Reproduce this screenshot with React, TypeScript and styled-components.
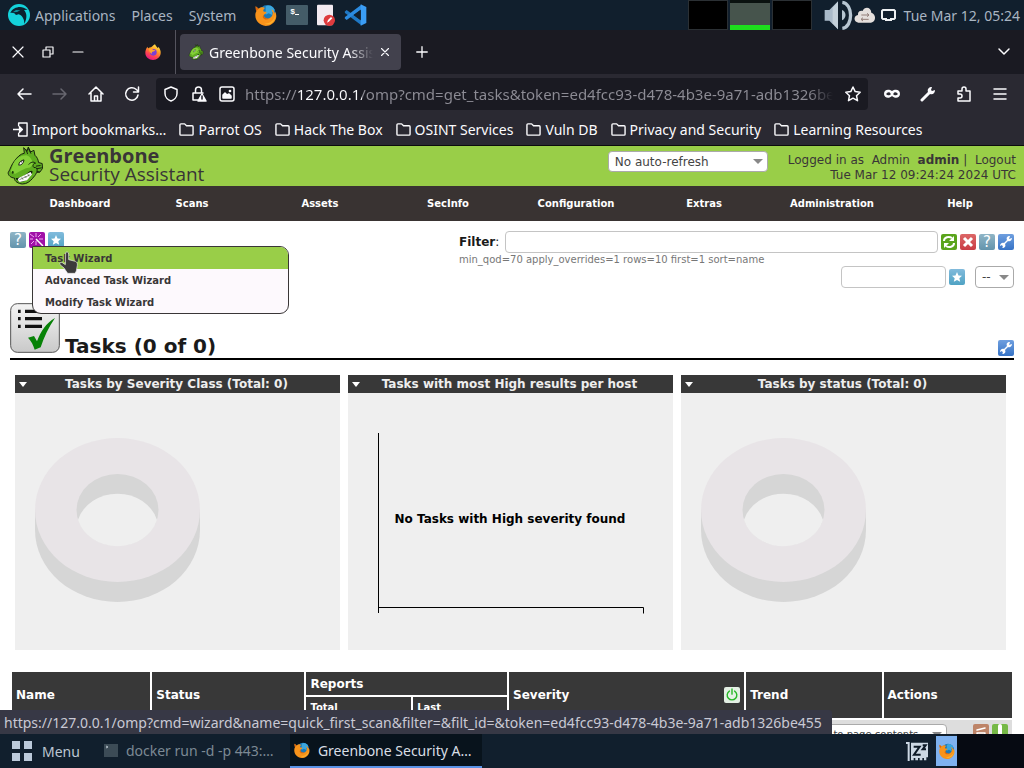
import React, { useState } from "react";
import styled, { createGlobalStyle, css } from "styled-components";

const URL_TEXT =
  "https://127.0.0.1/omp?cmd=get_tasks&token=ed4fcc93-d478-4b3e-9a71-adb1326be455";
const STATUS_TEXT =
  "https://127.0.0.1/omp?cmd=wizard&name=quick_first_scan&filter=&filt_id=&token=ed4fcc93-d478-4b3e-9a71-adb1326be455";

const bookmarks = [
  "Parrot OS",
  "Hack The Box",
  "OSINT Services",
  "Vuln DB",
  "Privacy and Security",
  "Learning Resources",
];

const menuItems = [
  "Dashboard",
  "Scans",
  "Assets",
  "SecInfo",
  "Configuration",
  "Extras",
  "Administration",
  "Help",
];

const wizards = ["Task Wizard", "Advanced Task Wizard", "Modify Task Wizard"];

// --- Icons ---
type LineProps = { size?: number; children: React.ReactNode; width?: number };

const Line: React.FC<LineProps> = ({ size = 16, width = 1.5, children }) => (
  <svg
    width={size}
    height={size}
    viewBox="0 0 16 16"
    fill="none"
    stroke="currentColor"
    strokeWidth={width}
    strokeLinecap="round"
    strokeLinejoin="round"
    aria-hidden="true"
  >
    {children}
  </svg>
);

const ParrotLogo = () => (
  <svg width="22" height="22" viewBox="0 0 66 66" aria-hidden="true">
    <circle cx="33" cy="33" r="33" fill="#14d3dc" />
    <path
      d="M7 27C14 12 32 6 47 11l12 6-11 1c9 9 10 25 1 41 0-14-6-24-17-28l-8 2-5-5c-4-2-8-2-12-1z"
      fill="#0b2230"
    />
    <path d="M14 25l10-7 13 1-10 5z" fill="#0e8f9b" />
  </svg>
);

const OldFirefox: React.FC<{ size: number }> = ({ size }) => (
  <svg width={size} height={size} viewBox="0 0 66 66" aria-hidden="true">
    <circle cx="37" cy="28" r="25" fill="#1b79b8" />
    <path d="M32 7c10-6 24 0 27 11l-8 8 2 8-12-6-9 4z" fill="#3aa7df" />
    <path
      d="M2 7l9 7c4-4 9-5 14-4l5 2c-4 3-6 7-5 10 2 2 6 1 10 2-1 6-8 6-9 10 1 8 9 12 17 9 7-3 11-10 10-18l-4-9c7 2 9 7 10 13l1-6c4 6 5 13 3 20-4 14-16 23-31 23C14 64 1 52 1 34 1 29 2 26 4 22z"
      fill="#f7931b"
    />
    <path d="M2 7l9 7-7 8c-2-5-3-10-2-15zM26 32c1 9 8 13 17 11-8 7-18 3-20-5z" fill="#d9660f" />
    <path d="M60 24c4 22-14 36-32 34 18 12 38-8 32-34z" fill="#fdb12c" />
  </svg>
);

const NewFirefox = () => (
  <svg width="16" height="16" viewBox="0 0 48 48" aria-hidden="true">
    <defs>
      <linearGradient id="fx" x1="0.8" y1="0" x2="0.3" y2="1">
        <stop offset="0" stopColor="#fff04f" />
        <stop offset="0.4" stopColor="#ff9a23" />
        <stop offset="0.7" stopColor="#ff4550" />
        <stop offset="1" stopColor="#e31587" />
      </linearGradient>
    </defs>
    <path
      d="M30 1c2 5 5 7 8 11 2-1 2-3 2-4 5 6 8 13 7 20-1 12-11 20-23 20S1 39 1 27C1 20 3 13 8 8c0 3 1 4 2 5 2-2 5-3 8-3 3-1 6-6 12-9z"
      fill="url(#fx)"
    />
    <circle cx="25" cy="25" r="10" fill="#7a3fd6" />
    <path d="M12 15c5-2 10 0 13 3l6 1c-2 3-5 4-8 4-3 1-3 4-1 6-6 0-10-7-10-14z" fill="#ffa62b" />
  </svg>
);

const TerminalIcon = () => (
  <svg width="22" height="20" viewBox="0 0 22 20" aria-hidden="true">
    <rect width="22" height="20" rx="1" fill="#445c68" />
    <path d="M9 9.500h4" stroke="#fff" />
  </svg>
);

const NoteIcon = () => (
  <svg width="18" height="22" viewBox="0 0 54 66" aria-hidden="true">
    <rect x="0" y="2" width="48" height="62" rx="3" fill="#f3ebf1" />
    <circle cx="37" cy="49" r="17" fill="#dd3b3e" />
    <path d="M30 56l3-8 9-9 4 4-9 9z" fill="#fff" />
  </svg>
);

const CodeIcon = () => (
  <svg width="23" height="22" viewBox="0 0 69 66" aria-hidden="true">
    <path d="M2 23l6-5 44 32v14L3 27z" fill="#1f78c4" />
    <path d="M2 43l6 5 44-32V2L3 39z" fill="#2b8be0" />
    <path d="M50 1l17 8v48l-17 8z" fill="#3a9df5" />
    <path d="M50 18L29 33l21 15z" fill="#111f2d" />
  </svg>
);

const VolumeIcon = () => (
  <svg width="30" height="30" viewBox="0 0 90 90" aria-hidden="true">
    <path d="M2 30h14L42 4v84L16 62H2z" fill="#a9bac9" />
    <path d="M26 23L42 5v83L26 70z" fill="#c3d0da" />
    <path d="M54 30c14 5 14 25 0 31z" fill="#b7c6d2" />
    <path d="M55 7c33 4 33 74 0 78" fill="none" stroke="#b7c6d2" strokeWidth="10" />
  </svg>
);

const CloudIcon = () => (
  <svg width="22" height="18" viewBox="0 0 66 54" aria-hidden="true">
    <path
      d="M13 50C-3 48-1 28 12 27 11 13 24 14 26 15 31 1 51 2 52 20c15 4 15 28-1 30z"
      fill="#e4dfdc"
    />
    <path d="M22 27h22m-5-5l6 5-6 5M44 40H22m5-5l-6 5 6 5" stroke="#927e78" strokeWidth="3" fill="none" />
  </svg>
);

const DisplayIcon = () => (
  <svg width="15" height="13" viewBox="0 0 15 13" aria-hidden="true">
    <path d="M2 1h11l1 1v7l-1 1h-3v1H5v-1H2L1 9V2z" fill="none" stroke="#eef1f3" strokeWidth="2" />
  </svg>
);

const DragonHead: React.FC<{ width: number; height: number }> = ({ width, height }) => (
  <svg width={width} height={height} viewBox="18 18 112 118" aria-hidden="true">
    <path
      d="M72 40l-2-17 10 11 4-13 7 15 10-5 3 15c7 6 10 14 11 22l11 3 1 15-8 11-10 1c-3 9-8 12-12 18-8 9-17 17-31 17-11-1-24-7-24-18-11-1-19-8-19-16 7-12 10-25 20-37 8-10 16-20 29-22z"
      fill="#5fae20"
      stroke="#16220f"
      strokeWidth="3"
    />
    <path d="M39 70c8-15 22-24 39-24 12 4 19 14 20 28l-9 9-12 2-16 8-16 9c-9 0-14-3-14-9z" fill="#84d038" />
    <path d="M76 27l6 15m2-17l8 16" stroke="#17240e" strokeWidth="3" />
    <path d="M55 76c1-9 6-14 16-16-1 10-7 16-16 16z" fill="#fff" stroke="#17240e" strokeWidth="3" />
    <circle cx="64" cy="66" r="2" fill="#111" />
    <path d="M46 115c16 0 29-9 41-20 7-5 12-1 9 4-7 14-19 26-35 28l-13-7z" fill="#102008" />
    <path d="M55 115l36-18 4 7-15 18-22 5-6-6z" fill="#fff" />
    <path d="M64 113l4 7m5-12l5 7m5-12l3 7M57 120l33-15" stroke="#4d5a45" strokeWidth="2" fill="none" />
    <path
      d="M85 74c6-7 14-10 21-4-8 1-10 9-5 13 8-1 11 4 10 10M107 79l14-2m-13 10l17-3m-17 10l11 3"
      stroke="#16220f"
      strokeWidth="3"
      fill="none"
    />
    <ellipse cx="37" cy="98" rx="3" ry="4" fill="#1c3b0b" />
  </svg>
);

const Wrench = () => (
  <svg width="16" height="16" viewBox="0 0 16 16" aria-hidden="true">
    <path
      d="M14 4l-3 1 1-3c-3 0-4 2-3 4L6 9C4 8 2 10 2 12l2-1 1 2-1 1c3 0 4-2 3-4l3-3c2 1 4-1 4-3z"
      fill="#fff"
    />
  </svg>
);

const StarGlyph = () => (
  <svg width="16" height="16" viewBox="0 0 16 16" aria-hidden="true">
    <path d="M8 3l1.500 3.500 3.500.3-2.700 2.400.9 3.600L8 10.900l-3.200 1.900.9-3.600L3 6.800l3.500-.3z" fill="#fff" />
  </svg>
);

const WandGlyph = () => (
  <svg width="16" height="16" viewBox="0 0 16 16" stroke="#fff" strokeWidth="1" aria-hidden="true">
    <path d="M7 7l7 7" strokeWidth="1.500" />
    <path d="M7 1v4M12 2L9 5M1 2l4 3M1 7h3M2 12l3-3M7 9v4M10 7h4" stroke="#f0a8f0" />
  </svg>
);

const RefreshGlyph = () => (
  <svg width="16" height="16" viewBox="0 0 16 16" fill="none" stroke="#fff" strokeWidth="2" aria-hidden="true">
    <path d="M3 7c0-4 5-5 8-3M13 9c0 4-5 5-8 3" />
    <path d="M13 2v5H8zM3 14V9h5z" fill="#fff" stroke="none" />
  </svg>
);

const CrossGlyph = () => (
  <svg width="16" height="16" viewBox="0 0 16 16" stroke="#fff" strokeWidth="3" aria-hidden="true">
    <path d="M4 4l8 8M12 4l-8 8" />
  </svg>
);

const TaskIcon = () => (
  <svg width="50" height="50" viewBox="0 0 150 150" aria-hidden="true">
    <defs>
      <linearGradient id="tile" x1="0" y1="0" x2="0" y2="1">
        <stop offset="0" stopColor="#f4f4f4" />
        <stop offset="1" stopColor="#c9c9c9" />
      </linearGradient>
    </defs>
    <rect x="2" y="2" width="146" height="146" rx="20" fill="url(#tile)" stroke="#555" strokeWidth="3" />
    <path d="M24 25h8M24 47h8M24 70h8M45 25h51M45 47h51M45 70h51" stroke="#111" strokeWidth="10" />
    <path d="M54 104l18-5 9 16c11-29 27-55 54-70-19 28-33 57-43 88l-18 7c-4-14-10-26-20-36z" fill="#078207" />
  </svg>
);

const HandCursor = () => (
  <svg width="19" height="23" viewBox="0 0 57 69" aria-hidden="true">
    <path
      d="M20 5c4-4 9-1 9 4v17l20 5c5 2 7 6 6 12l-3 17-4 7H26L15 51 3 41c-3-4 2-9 7-6l9 6z"
      fill="#3c3a3b"
      stroke="#eee"
      strokeWidth="2"
    />
  </svg>
);

const SleepIcon = () => (
  <svg width="23" height="21" viewBox="0 0 69 63" aria-hidden="true">
    <path d="M0 3h11v57H5V9H0z" fill="#ccd8e4" />
    <path d="M15 5h51v44h-5v9h-7v-7h-5v7h-8v-7h-5v7h-8v-7h-5v7h-8z" fill="#ccd8e4" />
    <path d="M23 17h18L24 41h20M50 13h9L50 25h10" fill="none" stroke="#0d1a27" strokeWidth="6" />
  </svg>
);

const Donut = () => (
  <ChartSvg viewBox="0 0 325 257" preserveAspectRatio="xMidYMin meet">
    <path d="M20 117v20a82.500 72 0 0 0 165 0v-20z" fill="#d6d6d6" />
    <ellipse cx="102.5" cy="117" rx="82.5" ry="72" fill="#e8e4e7" />
    <ellipse cx="102.5" cy="117" rx="41" ry="36" fill="#d6d6d6" />
    <path d="M63 127a41 36 0 0 1 79 0a41 36 0 0 1 -79 0z" fill="#efefef" />
  </ChartSvg>
);

const App: React.FC = () => {
  const [url, setUrl] = useState(URL_TEXT);
  const [filter, setFilter] = useState("");
  const [filterName, setFilterName] = useState("");

  return (
    <>
      <GlobalStyle />
      <Desktop>
        <TopPanel>
          <PanelMenu>
            <ParrotLogo />
            <PlainButton>Applications</PlainButton>
            <PlainButton>Places</PlainButton>
            <PlainButton>System</PlainButton>
          </PanelMenu>
          <Launchers>
            <PlainButton aria-label="Firefox"><OldFirefox size={22} /></PlainButton>
            <PlainButton aria-label="Terminal">
              <TerminalIcon />
              <Prompt>$</Prompt>
            </PlainButton>
            <PlainButton aria-label="Editor"><NoteIcon /></PlainButton>
            <PlainButton aria-label="Code"><CodeIcon /></PlainButton>
          </Launchers>
          <Workspaces>
            <Workspace aria-label="Workspace 1" />
            <Workspace aria-label="Workspace 2" $active />
            <Workspace aria-label="Workspace 3" />
          </Workspaces>
          <Tray>
            <VolumeIcon />
            <CloudIcon />
            <DisplayIcon />
          </Tray>
          <Clock>Tue Mar 12, 05:24</Clock>
        </TopPanel>

        <TabStrip>
          <WindowButtons>
            <PlainButton aria-label="Close window">
              <Line width={1.2}><path d="M3 3l10 10M13 3L3 13" /></Line>
            </PlainButton>
            <PlainButton aria-label="Restore window">
              <Line width={1.2}><path d="M3 6h7v7H3zM6 5V3h7v7h-2" /></Line>
            </PlainButton>
            <PlainButton aria-label="Minimise window">
              <Line width={1.2}><path d="M3 8h10" /></Line>
            </PlainButton>
          </WindowButtons>
          <PinnedTab aria-label="Firefox View"><NewFirefox /></PinnedTab>
          <Tab>
            <DragonHead width={16} height={16} />
            <TabTitle>Greenbone Security Assis</TabTitle>
            <PlainButton aria-label="Close tab">
              <Line size={14} width={1.3}><path d="M4 4l8 8M12 4l-8 8" /></Line>
            </PlainButton>
          </Tab>
          <NewTab aria-label="New tab">
            <Line><path d="M8 2v12M2 8h12" /></Line>
          </NewTab>
          <PlainButton aria-label="List all tabs">
            <Line><path d="M3 5l5 5 5-5" /></Line>
          </PlainButton>
        </TabStrip>

        <BrowserBar>
          <NavButton aria-label="Back">
            <Line><path d="M15 8H2M7 3L2 8l5 5" /></Line>
          </NavButton>
          <NavButton aria-label="Forward" disabled>
            <Line><path d="M1 8h13M9 3l5 5-5 5" /></Line>
          </NavButton>
          <NavButton aria-label="Home">
            <Line><path d="M1 8l7-7 7 7M3 7v8h10V7M6.500 15v-5h3v5" /></Line>
          </NavButton>
          <NavButton aria-label="Reload">
            <Line><path d="M14 9A6.200 6.200 0 1 1 12 3.300L14 5M14.500 1v5h-5" /></Line>
          </NavButton>
          <UrlField>
            <Line><path d="M8 1l6 2.500v4C14 11 11 14 8 15 5 14 2 11 2 7.500v-4z" /></Line>
            <Line>
              <path d="M4.500 7V4a3 3 0 0 1 6 0v3M7 14H2V7h10" />
              <path d="M11 8l4 7H7z" fill="currentColor" />
              <path d="M11 10v3" stroke="#1a1a22" />
            </Line>
            <Line>
              <rect x="1" y="1" width="14" height="14" rx="2" />
              <path d="M4 12V9l2-2 2 2 2-1 2 2v2z" fill="currentColor" />
              <circle cx="11" cy="5" r="0.6" fill="currentColor" />
            </Line>
            <UrlInput
              aria-label="Address"
              value={url}
              onChange={(e) => setUrl(e.target.value)}
            />
            <PlainButton aria-label="Bookmark this page">
              <Line>
                <path d="M8 1l2.200 4.600 5 .6-3.700 3.500 1 5L8 12.200l-4.500 2.500 1-5L.8 6.200l5-.6z" />
              </Line>
            </PlainButton>
          </UrlField>
          <NavButton aria-label="Private mask">
            <Line>
              <path
                d="M0 8c0-5 5-5 8-3 3-2 8-2 8 3 0 4-5 5-8 2-3 3-8 2-8-2z"
                fill="currentColor"
                stroke="none"
              />
              <path d="M3 8q2-2 3 0-2 1-3 0zM10 8q1-2 3 0-1 1-3 0z" stroke="#2a2932" />
            </Line>
          </NavButton>
          <NavButton aria-label="Tools">
            <Line>
              <path d="M2 14l7-7" strokeWidth="3" />
              <path d="M15 4l-3 1-1-1 1-3C9 1 7 3 8 6l2 2c3 1 5-1 5-4z" fill="currentColor" stroke="none" />
            </Line>
          </NavButton>
          <NavButton aria-label="Extensions">
            <Line><path d="M2 15h12V5h-4V3a2 2 0 0 0-4 0v2H2v3h2a2 2 0 0 1 0 4H2z" /></Line>
          </NavButton>
          <NavButton aria-label="Menu">
            <Line><path d="M2 3h12M2 8h12M2 13h12" /></Line>
          </NavButton>
        </BrowserBar>

        <BookmarkBar>
          <Bookmark href="#import">
            <Line size={15}><path d="M6 4V1h9v14H6v-3M0 8h9M7 5l3 3-3 3z" /></Line>
            Import bookmarks…
          </Bookmark>
          {bookmarks.map((name) => (
            <Bookmark key={name} href="#bookmark">
              <Line size={15}><path d="M1 3q0-1 1-1h4l2 2h6q1 0 1 1v8q0 1-1 1H2q-1 0-1-1z" /></Line>
              {name}
            </Bookmark>
          ))}
        </BookmarkBar>

        <PageView>
          <GsaHeader>
            <Brand>
              <DragonHead width={38} height={39} />
              <BrandText>
                <BrandName>Greenbone</BrandName>
                <BrandSub>Security Assistant</BrandSub>
              </BrandText>
            </Brand>
            <SelectWrap $size="wide">
              <Select aria-label="Auto-refresh">
                <option>No auto-refresh</option>
              </Select>
              <Caret />
            </SelectWrap>
            <Session>
              <div>
                Logged in as&nbsp; <SessionLink href="#role">Admin</SessionLink>&nbsp;{" "}
                <SessionLink href="#user"><b>admin</b></SessionLink> |{" "}
                &nbsp;<SessionLink href="#logout">Logout</SessionLink>
              </div>
              <div>Tue Mar 12 09:24:24 2024 UTC</div>
            </Session>
          </GsaHeader>

          <GsaNav>
            {menuItems.map((item, i) => (
              <GsaNavLink key={item} href={`#${item}`} $indent={i === 0}>
                {item}
              </GsaNavLink>
            ))}
          </GsaNav>

          <Content>
            <Toolbar>
              <ToolIcons>
                <IconButton $tone="help" aria-label="Help">?</IconButton>
                <WizardAnchor>
                  <IconButton $tone="wizard" aria-label="Wizard"><WandGlyph /></IconButton>
                  <WizardMenu>
                    {wizards.map((name, i) => (
                      <WizardItem key={name} href="#wizard" $active={i === 0}>
                        {name}
                      </WizardItem>
                    ))}
                    <Pointer><HandCursor /></Pointer>
                  </WizardMenu>
                </WizardAnchor>
                <IconButton $tone="star" aria-label="New task"><StarGlyph /></IconButton>
              </ToolIcons>
              <FilterBox>
                <FilterRow>
                  <FilterLabel htmlFor="filter"><b>Filter</b>:</FilterLabel>
                  <TextInput
                    id="filter"
                    value={filter}
                    onChange={(e) => setFilter(e.target.value)}
                  />
                  <IconGroup>
                    <IconButton $tone="green" aria-label="Update filter"><RefreshGlyph /></IconButton>
                    <IconButton $tone="red" aria-label="Reset filter"><CrossGlyph /></IconButton>
                    <IconButton $tone="help" aria-label="Filter help">?</IconButton>
                    <IconButton $tone="blue" aria-label="Edit filter"><Wrench /></IconButton>
                  </IconGroup>
                </FilterRow>
                <FilterHint>min_qod=70 apply_overrides=1 rows=10 first=1 sort=name</FilterHint>
                <SavedRow>
                  <TextInput
                    $short
                    aria-label="Filter name"
                    value={filterName}
                    onChange={(e) => setFilterName(e.target.value)}
                  />
                  <IconButton $tone="star" aria-label="Save filter"><StarGlyph /></IconButton>
                  <SelectWrap $size="tiny">
                    <Select aria-label="Saved filters"><option>--</option></Select>
                    <Caret />
                  </SelectWrap>
                </SavedRow>
              </FilterBox>
            </Toolbar>

            <Heading>
              <HeadingIcon><TaskIcon /></HeadingIcon>
              <Title>Tasks (0 of 0)</Title>
              <IconButton $tone="blue" aria-label="Dashboard settings"><Wrench /></IconButton>
            </Heading>

            <Charts>
              <Panel>
                <PanelHead><Caret $light />Tasks by Severity Class (Total: 0)</PanelHead>
                <Donut />
              </Panel>
              <Panel>
                <PanelHead><Caret $light />Tasks with most High results per host</PanelHead>
                <ChartSvg viewBox="0 0 325 257" preserveAspectRatio="xMidYMin meet">
                  <path d="M30.500 40v180M30 214.500h265.500v6" fill="none" stroke="#000" />
                  <text x="162" y="130" textAnchor="middle" fontSize="12" fontWeight="bold">
                    No Tasks with High severity found
                  </text>
                </ChartSvg>
              </Panel>
              <Panel>
                <PanelHead><Caret $light />Tasks by status (Total: 0)</PanelHead>
                <Donut />
              </Panel>
            </Charts>

            <TaskTable>
              <colgroup>
                <Col $share={140} />
                <Col $share={154} />
                <Col $share={106} />
                <Col $share={95} />
                <Col $share={238} />
                <Col $share={137} />
                <Col $share={130} />
              </colgroup>
              <thead>
                <tr>
                  <Th rowSpan={2}>Name</Th>
                  <Th rowSpan={2}>Status</Th>
                  <Th colSpan={2}>Reports</Th>
                  <Th rowSpan={2}>
                    <ThFlex>
                      Severity
                      <IconButton $tone="power" aria-label="Overrides">
                        <Line size={14} width={1.6}>
                          <path d="M5 3.500a5.500 5.500 0 1 0 6 0M8 1v6" />
                        </Line>
                      </IconButton>
                    </ThFlex>
                  </Th>
                  <Th rowSpan={2}>Trend</Th>
                  <Th rowSpan={2}>Actions</Th>
                </tr>
                <tr>
                  <Th $small>Total</Th>
                  <Th $small>Last</Th>
                </tr>
              </thead>
              <tfoot>
                <tr>
                  <FootCell colSpan={7}>
                    <FootFlex>
                      <SelectWrap $size="foot">
                        <Select aria-label="Bulk action">
                          <option>Apply to page contents</option>
                        </Select>
                        <Caret />
                      </SelectWrap>
                      <IconGroup>
                        <IconButton $tone="trash" aria-label="Move to trashcan">
                          <Line><path d="M4 6l8-2M4 9h8l-1 5H5z" /></Line>
                        </IconButton>
                        <IconButton $tone="export" aria-label="Export">
                          <Line width={4}><path d="M8 2v8" /></Line>
                        </IconButton>
                      </IconGroup>
                    </FootFlex>
                  </FootCell>
                </tr>
              </tfoot>
            </TaskTable>
          </Content>
          <StatusBubble>{STATUS_TEXT}</StatusBubble>
        </PageView>

        <Taskbar>
          <MenuButton>
            <svg width="20" height="20" viewBox="0 0 20 20" fill="#bccada" aria-hidden="true">
              <path d="M0 0h8v8H0zM12 0h8v8h-8zM0 12h8v8H0zM12 12h8v8h-8z" />
            </svg>
            Menu
          </MenuButton>
          <TaskButton>
            <svg width="14" height="13" viewBox="0 0 14 13" aria-hidden="true">
              <rect width="14" height="13" fill="#3c4b56" />
              <path d="M2 2l2 1-2 1" stroke="#b7c2ca" fill="none" />
            </svg>
            docker run -d -p 443:…
          </TaskButton>
          <TaskButton $active>
            <OldFirefox size={16} />
            Greenbone Security A…
          </TaskButton>
          <TaskTray>
            <SleepIcon />
            <TrayActive aria-label="Firefox workspace"><OldFirefox size={16} /></TrayActive>
            <TrayEnd />
          </TaskTray>
        </Taskbar>
      </Desktop>
    </>
  );
};

// --- Base ---
const GlobalStyle = createGlobalStyle`
  * {
    box-sizing: border-box;
  }

  body {
    margin: 0;
    font-family: "Noto Sans", sans-serif;
    font-size: 14px;
    background: #fff;
  }

  svg {
    display: block;
    flex-shrink: 0;
  }
`;

const Desktop = styled.div`
  display: flex;
  flex-direction: column;
  height: 100vh;
  overflow: hidden;
`;

const PlainButton = styled.button`
  position: relative;
  display: flex;
  align-items: center;
  padding: 0;
  border: none;
  background: none;
  color: inherit;
  font: inherit;
  white-space: nowrap;
  cursor: pointer;
`;

// --- Desktop panel ---
const TopPanel = styled.header`
  display: flex;
  align-items: center;
  flex-shrink: 0;
  height: 30px;
  padding: 0 4px 0 8px;
  background: #111f2d;
  color: #a9b5c2;
`;

const PanelMenu = styled.nav`
  display: flex;
  align-items: center;
  gap: 16px;

  svg {
    margin-right: -11px;
  }
`;

const Launchers = styled.div`
  display: flex;
  align-items: center;
  flex: 1;
  gap: 9px;
  margin-left: 19px;
`;

const Prompt = styled.span`
  position: absolute;
  top: 2px;
  left: 4px;
  color: #fff;
  font: bold 8px "Liberation Mono", monospace;
`;

const Workspaces = styled.div`
  display: flex;
  gap: 2px;
  height: 30px;
  margin-right: 12px;
`;

const Workspace = styled.button<{ $active?: boolean }>`
  width: 40px;
  padding: 0;
  border: 1px solid #2b3034;
  background: #000;

  ${(props) =>
    props.$active &&
    css`
      border-width: 3px 0 5px;
      border-color: #0a120f #000 #1ddf1d;
      background: #46544c;
    `}
`;

const Tray = styled.div`
  display: flex;
  align-items: center;

  svg:last-child {
    margin-left: 5px;
  }
`;

const Clock = styled.time`
  margin-left: 8px;
`;

// --- Browser chrome ---
const TabStrip = styled.div`
  display: flex;
  align-items: center;
  flex-shrink: 0;
  height: 44px;
  padding: 0 12px 0 10px;
  background: #1a1a22;
  color: #fbfbfe;
`;

const WindowButtons = styled.div`
  display: flex;
  gap: 14px;
`;

const PinnedTab = styled(PlainButton)`
  height: 44px;
  margin-left: 59px;
  padding-right: 14px;
  border-right: 1px solid #55545e;
`;

const Tab = styled.div`
  display: flex;
  align-items: center;
  gap: 5px;
  width: 221px;
  height: 36px;
  margin-left: 4px;
  padding: 0 9px 0 8px;
  border-radius: 4px;
  background: #42414d;
`;

const TabTitle = styled.span`
  flex: 1;
  min-width: 0;
  overflow: hidden;
  white-space: nowrap;
  mask-image: linear-gradient(to left, transparent, #000 24px);
`;

const NewTab = styled(PlainButton)`
  margin-left: 14px;
  margin-right: auto;

  svg {
    width: 14px;
  }
`;

const BrowserBar = styled.div`
  display: flex;
  align-items: center;
  flex-shrink: 0;
  gap: 4px;
  height: 40px;
  padding: 0 8px;
  background: #2a2932;
  color: #fbfbfe;
`;

const NavButton = styled(PlainButton)`
  justify-content: center;
  width: 32px;
  height: 32px;

  &:disabled {
    color: #686770;
  }
`;

const UrlField = styled.div`
  display: flex;
  align-items: center;
  flex: 1;
  gap: 12px;
  height: 32px;
  margin: 0 4px;
  padding: 0 7px;
  border-radius: 4px;
  background: #1a1a22;
`;

const UrlInput = styled.input`
  flex: 1;
  min-width: 0;
  margin-left: -2px;
  padding: 0;
  border: none;
  outline: none;
  background: linear-gradient(90deg, #8d8c95 52px, #fbfbfe 52px 117px, #8d8c95 117px);
  background-clip: text;
  color: transparent;
  caret-color: #fff;
  font: inherit;
  font-size: 15px;
  mask-image: linear-gradient(to left, transparent, #000 24px);
`;

const BookmarkBar = styled.nav`
  display: flex;
  align-items: center;
  flex-shrink: 0;
  gap: 13px;
  height: 32px;
  padding: 0 13px;
  border-bottom: 1px solid #0c0c0d;
  background: #2a2932;
`;

const Bookmark = styled.a`
  display: flex;
  align-items: center;
  gap: 4px;
  color: #fbfbfe;
  text-decoration: none;
  white-space: nowrap;
`;

// --- Web page ---
const PageView = styled.main`
  position: relative;
  flex: 1;
  min-height: 0;
  overflow: hidden;
  background: #fff;
  color: #1a1a1a;
  font-family: "DejaVu Sans", sans-serif;
  font-size: 12px;
`;

const GsaHeader = styled.div`
  display: flex;
  align-items: flex-start;
  height: 40px;
  padding: 0 8px 0 6px;
  background: #99ce48;
  color: #393637;
`;

const Brand = styled.div`
  display: flex;
  flex: 1;
  gap: 5px;
`;

const BrandText = styled.div`
  font-family: "Open Sans", sans-serif;
`;

const BrandName = styled.div`
  font-size: 20px;
  font-weight: bold;
  line-height: 19px;
`;

const BrandSub = styled.div`
  font-size: 19px;
  line-height: 19px;
`;

const selectSizes = {
  wide: css`
    width: 160px;
    height: 21px;
    margin-top: 5px;
  `,
  tiny: css`
    width: 39px;
    height: 22px;
    margin-left: 7px;
  `,
  foot: css`
    width: 152px;
    height: 20px;
    font-size: 10px;
  `,
};

const SelectWrap = styled.div<{ $size: keyof typeof selectSizes }>`
  display: flex;
  align-items: center;
  padding: 0 4px 0 6px;
  border: 1px solid #aaa;
  border-radius: 4px;
  background: #fff;
  ${(props) => selectSizes[props.$size]}
`;

const Select = styled.select`
  flex: 1;
  min-width: 0;
  padding: 0;
  border: none;
  outline: none;
  appearance: none;
  background: none;
  color: #444;
  font: inherit;
`;

const Caret = styled.span<{ $light?: boolean }>`
  flex-shrink: 0;
  border: ${(props) => (props.$light ? "4px" : "5px")} solid transparent;
  border-top: 5px solid ${(props) => (props.$light ? "#fff" : "#888")};
  border-bottom: 0;
`;

const Session = styled.div`
  margin: 7px 0 0 20px;
  line-height: 15px;
  text-align: right;
`;

const SessionLink = styled.a`
  color: inherit;
  text-decoration: none;
`;

const GsaNav = styled.nav`
  display: grid;
  grid-template-columns: repeat(8, 1fr);
  height: 35px;
  background: #393332;
`;

const GsaNavLink = styled.a<{ $indent?: boolean }>`
  display: flex;
  align-items: center;
  justify-content: center;
  padding-left: ${(props) => (props.$indent ? "32px" : "0")};
  color: #fff;
  font-size: 10px;
  font-weight: bold;
  text-decoration: none;
`;

const Content = styled.div`
  padding: 10px;
`;

const Toolbar = styled.div`
  display: flex;
  justify-content: space-between;
  height: 72px;
`;

const ToolIcons = styled.div`
  display: flex;
  gap: 3px;
  padding-top: 1px;
`;

const tones = {
  help: "linear-gradient(#8fb5c6, #6494ac)",
  wizard: "#a010a8",
  star: "linear-gradient(#82bbdc, #4fa3c4)",
  green: "#5aa41c",
  red: "linear-gradient(#dc6767, #c93c44)",
  blue: "linear-gradient(#6f9fdf, #3673c6)",
  power: "#e4f0e4",
  trash: "#bd8468",
  export: "#76b947",
};

const IconButton = styled.button<{ $tone: keyof typeof tones }>`
  display: flex;
  align-items: center;
  justify-content: center;
  flex-shrink: 0;
  width: 16px;
  height: 16px;
  padding: 0;
  border: none;
  border-radius: 2px;
  background: ${(props) => tones[props.$tone]};
  color: ${(props) => (props.$tone === "power" ? "#27b827" : "#fff")};
  font-family: "DejaVu Sans", sans-serif;
  font-size: 15px;
  line-height: 16px;
  cursor: pointer;
`;

const WizardAnchor = styled.div`
  position: relative;
`;

const WizardMenu = styled.div`
  position: absolute;
  z-index: 2;
  top: 14px;
  left: 3px;
  width: 257px;
  overflow: hidden;
  border: 1px solid #3a3637;
  border-radius: 0 9px 9px 9px;
  background: #fdf9fd;
`;

const WizardItem = styled.a<{ $active?: boolean }>`
  display: block;
  padding: 2px 0 0 12px;
  background: ${(props) => (props.$active ? "#99ce48" : "none")};
  color: #393637;
  font-size: 10px;
  font-weight: bold;
  line-height: 20px;
  text-decoration: none;
`;

const Pointer = styled.span`
  position: absolute;
  top: 4px;
  left: 26px;
`;

const FilterBox = styled.div`
  width: 555px;
`;

const FilterRow = styled.div`
  display: flex;
  align-items: center;
  gap: 3px;
`;

const FilterLabel = styled.label`
  width: 43px;
`;

const IconGroup = styled.div`
  display: flex;
  gap: 3px;
`;

const TextInput = styled.input<{ $short?: boolean }>`
  flex: ${(props) => (props.$short ? "none" : "1")};
  width: ${(props) => (props.$short ? "105px" : "auto")};
  min-width: 0;
  height: 22px;
  padding: 0 6px;
  border: 1px solid #c4c4c4;
  border-radius: 4px;
  background: #fff;
  font: inherit;
`;

const FilterHint = styled.div`
  color: #777;
  font-size: 10px;
  line-height: 13px;
`;

const SavedRow = styled.div`
  display: flex;
  align-items: center;
  justify-content: flex-end;
  gap: 3px;
`;

const Heading = styled.div`
  display: flex;
  align-items: flex-end;
  gap: 5px;
  height: 57px;
  padding-bottom: 2px;
  border-bottom: 2px solid #000;
`;

const HeadingIcon = styled.div`
  padding-bottom: 3px;
`;

const Title = styled.h1`
  flex: 1;
  margin: 0;
  font-size: 20px;
  line-height: 20px;
`;

const Charts = styled.div`
  display: grid;
  grid-template-columns: repeat(3, 1fr);
  gap: 8px;
  margin: 15px 8px 20px 5px;
`;

const Panel = styled.section`
  background: #efefef;
`;

const PanelHead = styled.h2`
  display: grid;
  grid-template-columns: 12px 1fr;
  align-items: center;
  height: 18px;
  margin: 0;
  padding: 0 18px 0 4px;
  background: #383838;
  color: #eee;
  font-size: 12px;
  text-align: center;

  ${Caret} {
    justify-self: start;
  }
`;

const ChartSvg = styled.svg`
  width: 100%;
  height: auto;
`;

const TaskTable = styled.table`
  width: 100%;
  border-spacing: 2px;
  table-layout: fixed;
`;

const Col = styled.col<{ $share: number }>`
  width: ${(props) => props.$share / 10}%;
`;

const Th = styled.th<{ $small?: boolean }>`
  height: ${(props) => (props.$small ? "21px" : "23px")};
  padding: 0 4px;
  background: #383838;
  color: #fff;
  font-size: ${(props) => (props.$small ? "10px" : "12px")};
  text-align: left;
`;

const ThFlex = styled.div`
  display: flex;
  align-items: center;
  justify-content: space-between;
`;

const FootCell = styled.td`
  padding: 4px;
  background: #ddd;
`;

const FootFlex = styled.div`
  display: flex;
  justify-content: flex-end;
  gap: 26px;
`;

const StatusBubble = styled.div`
  position: absolute;
  z-index: 3;
  bottom: 0;
  left: 0;
  height: 24px;
  padding: 0 10px 0 4px;
  border-radius: 0 3px 0 0;
  background: #373845;
  color: #c9c9d4;
  font-family: "Noto Sans", sans-serif;
  font-size: 14px;
  line-height: 25px;
  white-space: nowrap;
`;

// --- Taskbar ---
const Taskbar = styled.footer`
  display: flex;
  align-items: center;
  flex-shrink: 0;
  height: 34px;
  padding-left: 12px;
  background: #111f2d;
  color: #bcc6d2;
`;

const MenuButton = styled(PlainButton)`
  gap: 10px;
  margin-right: 20px;
`;

const TaskButton = styled(PlainButton)<{ $active?: boolean }>`
  gap: 8px;
  width: ${(props) => (props.$active ? "192px" : "190px")};
  height: 34px;
  padding: 0 4px;
  border-bottom: 2px solid ${(props) => (props.$active ? "#5a93e6" : "transparent")};
  background: ${(props) => (props.$active ? "#08131c" : "none")};
  color: ${(props) => (props.$active ? "#d8dee5" : "#7c8994")};
`;

const TaskTray = styled.div`
  display: flex;
  align-items: center;
  align-self: stretch;
  margin-left: auto;
`;

const TrayActive = styled(PlainButton)`
  justify-content: center;
  width: 21px;
  height: 30px;
  margin-left: 7px;
  background: #7fb2f0;
`;

const TrayEnd = styled.div`
  align-self: stretch;
  width: 67px;
  background: #060a12;
`;

export default App;
